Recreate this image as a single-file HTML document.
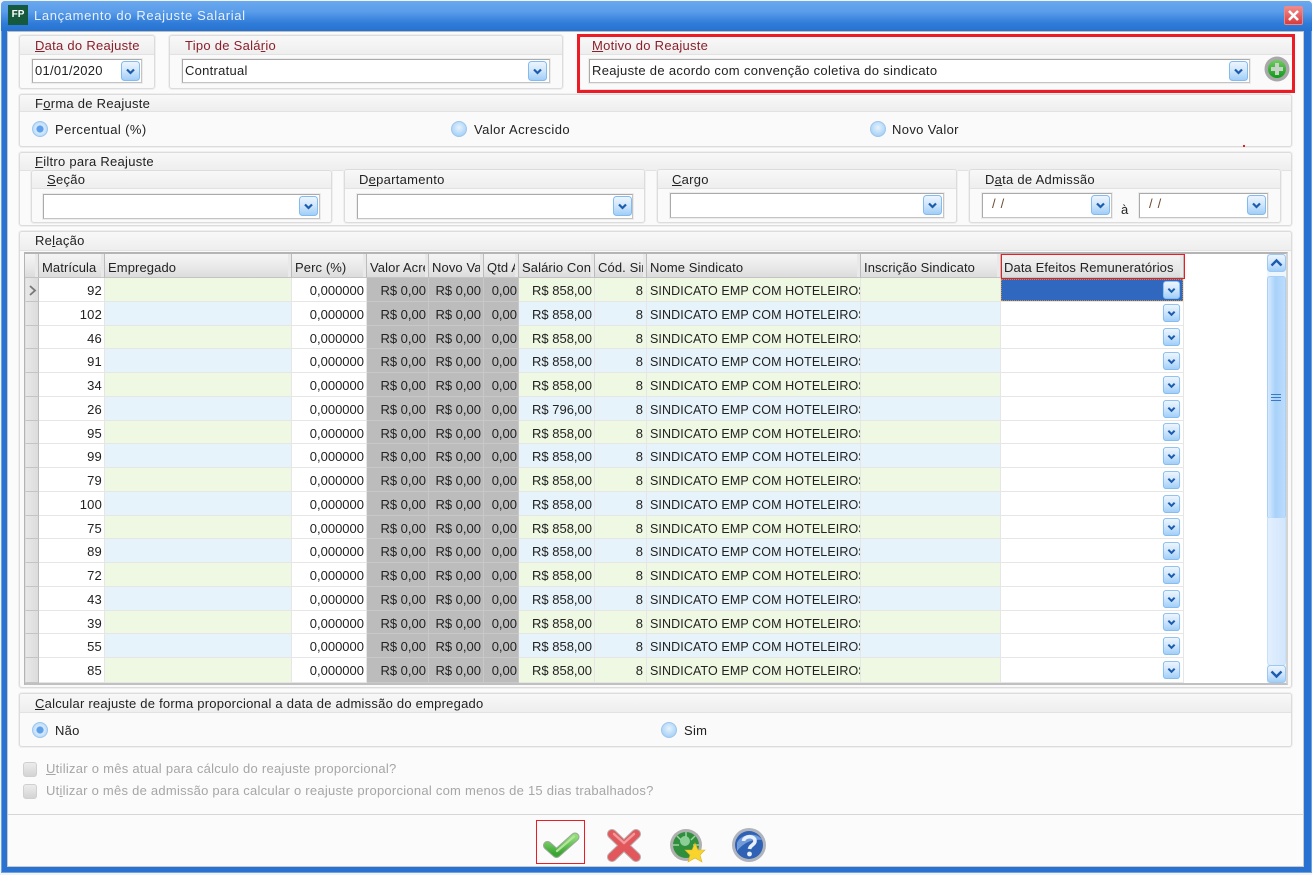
<!DOCTYPE html>
<html lang="pt"><head><meta charset="utf-8"><title>Lançamento do Reajuste Salarial</title>
<style>
*{box-sizing:border-box;margin:0;padding:0}
html,body{width:1312px;height:875px;overflow:hidden;background:#f2f3f4}
body{font:13px/16px "Liberation Sans",sans-serif;color:#222;letter-spacing:.27px}
#root{position:absolute;left:0;top:0;width:1312px;height:875px;overflow:hidden;filter:blur(.35px)}
.a,.p,.h,.i,.t,.cb,.ra,.ck,.r,.th,svg.b{position:absolute}
#win{position:absolute;left:1px;top:1px;width:1311px;height:872px;background:#2a72d2;border-radius:4px 4px 0 0;border:1px solid #6ea4de}
#tb{position:absolute;left:1px;top:1px;width:1311px;height:30px;background:linear-gradient(#6aa8ee,#5a9dea 35%,#2f7bd8 75%,#2672d2);border-radius:4px 4px 0 0}
#body{position:absolute;left:7px;top:31px;width:1297px;height:836px;background:#fbfbfb;border:1px solid #c8c8c8;border-top-color:#bcbcbc}
.p{background:#fafafa;border:1px solid #dcdcdc;border-radius:3px;box-shadow:0 0 0 1px #efefef}
.h{left:0;top:0;right:0;background:linear-gradient(#f8f8f8,#eeeeee);border-bottom:1px solid #e2e2e2;border-radius:3px 3px 0 0}
.t{white-space:nowrap}
.red{color:#8c1f2a}
.i{background:#fff;border:1px solid #aaa;border-bottom-color:#c4c4c4;border-right-color:#c4c4c4;box-shadow:0 0 0 1px #ececec}
.ra{width:16px;height:16px;border-radius:50%;background:radial-gradient(circle at 50% 40%,#e6f2fd,#a9d2f6 75%,#8cc0f0);border:1px solid #9cc6ee}
.ra.on{background:radial-gradient(circle,#5fa0ea 0,#5fa0ea 32%,#d8eafb 40%,#a9d2f6 90%)}
.ck{width:14px;height:15px;background:linear-gradient(#ececec,#d4d4d4);border:1px solid #d0d0d0;border-radius:3px}
.dis{color:#a6a6a6}
.th{top:254px;height:24px;background:linear-gradient(#f5f5f5,#e8e8e8 60%,#dcdcdc);border-right:1px solid #bcbcbc;border-bottom:1px solid #c4c4c4;padding:6px 0 0 3px;line-height:15px;overflow:hidden;white-space:nowrap;letter-spacing:.1px}
.th::after{content:"";position:absolute;right:0;top:0;bottom:0;width:3px;background:#e9e9e9}
.r{left:25px;width:1159px;height:23.75px;display:flex;overflow:hidden;letter-spacing:0}
.r span{display:block;height:100%;border-right:1px solid #e6e6e6;border-bottom:1px solid #e6e6e6;line-height:26px;overflow:hidden;white-space:nowrap;text-align:right;padding-right:2px;background:#fff}
.r span:nth-child(1){width:14px;background:linear-gradient(90deg,#e8e8e8,#dcdcdc);border-right:1px solid #bbb;border-left:1px solid #ddd;border-bottom:1px solid #c4c4c4}
.r span:nth-child(2){width:66px;letter-spacing:.2px}
.r span:nth-child(3){width:187px}
.r span:nth-child(4){width:75px}
.r span:nth-child(5){width:62px;background:#bcbcbc;border-color:#c8c8c8}
.r span:nth-child(6){width:55px;background:#bcbcbc;border-color:#c8c8c8}
.r span:nth-child(7){width:35px;background:#bcbcbc;border-color:#c8c8c8;padding-right:1px}
.r span:nth-child(8){width:76px}
.r span:nth-child(9){width:52px;padding-right:3px}
.r span:nth-child(10){width:214px;text-align:left;padding:0 0 0 3px;font-size:12.5px;letter-spacing:.1px}
.r span:nth-child(11){width:140px}
.r span:nth-child(12){width:183px}
.g span:nth-child(3),.g span:nth-child(8),.g span:nth-child(9),.g span:nth-child(10),.g span:nth-child(11){background:#eff8e2}
.u span:nth-child(3),.u span:nth-child(8),.u span:nth-child(9),.u span:nth-child(10),.u span:nth-child(11){background:#e6f3fa}
svg.b{width:19px;height:20px}
u{text-underline-offset:1px}
</style></head><body>
<svg width="0" height="0" style="position:absolute"><defs>
<linearGradient id="bg" x1="0" y1="0" x2="0" y2="1"><stop offset="0" stop-color="#eef6fe"/><stop offset=".5" stop-color="#cfe5fb"/><stop offset="1" stop-color="#9fcdf8"/></linearGradient>
<linearGradient id="gc" x1="0" y1="0" x2="0" y2="1"><stop offset="0" stop-color="#8fdc78"/><stop offset="1" stop-color="#38a632"/></linearGradient>
<linearGradient id="gp" x1="0" y1="0" x2="0" y2="1"><stop offset="0" stop-color="#70cc60"/><stop offset="1" stop-color="#0e9a18"/></linearGradient>
<symbol id="cmb" viewBox="0 0 19 20"><rect x=".5" y=".5" width="18" height="19" rx="3" fill="url(#bg)" stroke="#82bbf0"/><path d="M6 8.5 9.5 12 13 8.5" fill="none" stroke="#1b5cae" stroke-width="2.2"/></symbol>
</defs></svg>
<div id="root">
<div id="win"></div>
<div id="tb"></div>
<div class="a" style="left:8px;top:5px;width:20px;height:20px;background:#155a3c;color:#fff;font:bold 10px/20px 'Liberation Sans',sans-serif;text-align:center;letter-spacing:0">FP</div>
<div class="t" style="left:34px;top:8px;color:#e8f1fb;font-size:13px;letter-spacing:.65px">Lançamento do Reajuste Salarial</div>
<div class="a" style="left:1284px;top:6px;width:19px;height:19px;background:linear-gradient(#f08a8a,#d83c3c);border:1px solid #e88;border-radius:2px"></div>
<svg class="a" style="left:1287px;top:9px" width="13" height="13" viewBox="0 0 13 13"><path d="M2 2 11 11M11 2 2 11" stroke="#fff" stroke-width="2.6"/></svg>
<div id="body"></div>

<!-- top panels -->
<div class="p" style="left:19px;top:35px;width:136px;height:54px"><div class="h" style="height:19px"></div></div>
<div class="t red" style="left:35px;top:38px"><u>D</u>ata do Reajuste</div>
<div class="i" style="left:32px;top:59px;width:110px;height:24px"></div>
<div class="t" style="left:35px;top:63px">01/01/2020</div>
<svg class="b" style="left:121px;top:61px"><use href="#cmb"/></svg>

<div class="p" style="left:169px;top:35px;width:394px;height:54px"><div class="h" style="height:19px"></div></div>
<div class="t red" style="left:185px;top:38px">Tipo de Salá<u>r</u>io</div>
<div class="i" style="left:182px;top:59px;width:368px;height:24px"></div>
<div class="t" style="left:185px;top:63px">Contratual</div>
<svg class="b" style="left:528px;top:61px"><use href="#cmb"/></svg>

<div class="p" style="left:579px;top:36px;width:714px;height:54px"><div class="h" style="height:18px"></div></div>
<div class="t red" style="left:592px;top:38px"><u>M</u>otivo do Reajuste</div>
<div class="i" style="left:589px;top:59px;width:661px;height:24px"></div>
<div class="t" style="left:592px;top:63px;letter-spacing:.32px">Reajuste de acordo com convenção coletiva do sindicato</div>
<svg class="b" style="left:1229px;top:61px"><use href="#cmb"/></svg>
<svg class="a" style="left:1264px;top:56px" width="26" height="26" viewBox="0 0 26 26"><circle cx="13" cy="13" r="12.5" fill="#a8a8a8"/><circle cx="13" cy="13" r="9" fill="url(#gp)"/><path d="M13 7V19M7 13H19" stroke="#c8d2c8" stroke-width="4"/></svg>
<div class="a" style="left:577px;top:34px;width:718px;height:59px;border:3px solid #ed1c24"></div>

<!-- forma -->
<div class="p" style="left:19px;top:94px;width:1273px;height:53px"><div class="h" style="height:17px"></div></div>
<div class="t" style="left:35px;top:96px">F<u>o</u>rma de Reajuste</div>
<div class="ra on" style="left:32px;top:121px"></div><div class="t" style="left:55px;top:122px;letter-spacing:.4px">Percentual (%)</div>
<div class="ra" style="left:451px;top:121px"></div><div class="t" style="left:474px;top:122px;letter-spacing:.45px">Valor Acrescido</div>
<div class="ra" style="left:870px;top:121px"></div><div class="t" style="left:892px;top:122px;letter-spacing:.35px">Novo Valor</div>
<div class="a" style="left:1243px;top:145px;width:2px;height:2px;background:#ed1c24"></div>

<!-- filtro -->
<div class="p" style="left:19px;top:152px;width:1273px;height:74px"><div class="h" style="height:18px"></div></div>
<div class="p" style="left:31px;top:170px;width:301px;height:53px"><div class="h" style="height:18px"></div></div>
<div class="t" style="left:35px;top:154px;z-index:2"><u>F</u>iltro para Reajuste</div>
<div class="t" style="left:47px;top:172px"><u>S</u>eção</div>
<div class="i" style="left:43px;top:194px;width:277px;height:25px"></div>
<svg class="b" style="left:299px;top:196px"><use href="#cmb"/></svg>
<div class="p" style="left:344px;top:169px;width:301px;height:54px"><div class="h" style="height:19px"></div></div>
<div class="t" style="left:359px;top:172px">D<u>e</u>partamento</div>
<div class="i" style="left:357px;top:194px;width:276px;height:25px"></div>
<svg class="b" style="left:613px;top:196px"><use href="#cmb"/></svg>
<div class="p" style="left:657px;top:169px;width:300px;height:54px"><div class="h" style="height:19px"></div></div>
<div class="t" style="left:672px;top:172px"><u>C</u>argo</div>
<div class="i" style="left:670px;top:193px;width:274px;height:25px"></div>
<svg class="b" style="left:923px;top:195px"><use href="#cmb"/></svg>
<div class="p" style="left:969px;top:169px;width:312px;height:54px"><div class="h" style="height:19px"></div></div>
<div class="t" style="left:985px;top:172px">D<u>a</u>ta de Admissão</div>
<div class="i" style="left:982px;top:193px;width:130px;height:25px"></div>
<div class="t" style="left:992px;top:196px;letter-spacing:5px;color:#6b4a30">//</div>
<svg class="b" style="left:1091px;top:195px"><use href="#cmb"/></svg>
<div class="t" style="left:1121px;top:202px">à</div>
<div class="i" style="left:1139px;top:193px;width:129px;height:25px"></div>
<div class="t" style="left:1149px;top:196px;letter-spacing:5px;color:#6b4a30">//</div>
<svg class="b" style="left:1247px;top:195px"><use href="#cmb"/></svg>

<!-- relacao -->
<div class="p" style="left:19px;top:231px;width:1273px;height:457px"><div class="h" style="height:19px"></div></div>
<div class="t" style="left:35px;top:233px">Re<u>l</u>ação</div>
<div class="a" style="left:24px;top:252px;width:1264px;height:433px;background:#fff;border:2px solid #b4b4b4;border-right-color:#d4d4d4;border-bottom-color:#c0c0c0"></div>

<div class="th" style="left:25px;width:14px"></div>
<div class="th" style="left:39px;width:66px">Matrícula</div>
<div class="th" style="left:105px;width:187px">Empregado</div>
<div class="th" style="left:292px;width:75px">Perc (%)</div>
<div class="th" style="left:367px;width:62px">Valor Acrescido</div>
<div class="th" style="left:429px;width:55px">Novo Valor</div>
<div class="th" style="left:484px;width:35px">Qtd Anos</div>
<div class="th" style="left:519px;width:76px">Salário Contratual</div>
<div class="th" style="left:595px;width:52px">Cód. Sindicato</div>
<div class="th" style="left:647px;width:214px">Nome Sindicato</div>
<div class="th" style="left:861px;width:140px">Inscrição Sindicato</div>
<div class="th" style="left:1001px;width:183px">Data Efeitos Remuneratórios</div>

<div class="r g" style="top:278px"><span></span><span>92</span><span></span><span>0,000000</span><span>R$ 0,00</span><span>R$ 0,00</span><span>0,00</span><span>R$ 858,00</span><span>8</span><span>SINDICATO EMP COM HOTELEIROS</span><span></span><span style="background:#3068c0"></span></div>
<div class="r u" style="top:301.75px"><span></span><span>102</span><span></span><span>0,000000</span><span>R$ 0,00</span><span>R$ 0,00</span><span>0,00</span><span>R$ 858,00</span><span>8</span><span>SINDICATO EMP COM HOTELEIROS</span><span></span><span></span></div>
<div class="r g" style="top:325.5px"><span></span><span>46</span><span></span><span>0,000000</span><span>R$ 0,00</span><span>R$ 0,00</span><span>0,00</span><span>R$ 858,00</span><span>8</span><span>SINDICATO EMP COM HOTELEIROS</span><span></span><span></span></div>
<div class="r u" style="top:349.25px"><span></span><span>91</span><span></span><span>0,000000</span><span>R$ 0,00</span><span>R$ 0,00</span><span>0,00</span><span>R$ 858,00</span><span>8</span><span>SINDICATO EMP COM HOTELEIROS</span><span></span><span></span></div>
<div class="r g" style="top:373px"><span></span><span>34</span><span></span><span>0,000000</span><span>R$ 0,00</span><span>R$ 0,00</span><span>0,00</span><span>R$ 858,00</span><span>8</span><span>SINDICATO EMP COM HOTELEIROS</span><span></span><span></span></div>
<div class="r u" style="top:396.75px"><span></span><span>26</span><span></span><span>0,000000</span><span>R$ 0,00</span><span>R$ 0,00</span><span>0,00</span><span>R$ 796,00</span><span>8</span><span>SINDICATO EMP COM HOTELEIROS</span><span></span><span></span></div>
<div class="r g" style="top:420.5px"><span></span><span>95</span><span></span><span>0,000000</span><span>R$ 0,00</span><span>R$ 0,00</span><span>0,00</span><span>R$ 858,00</span><span>8</span><span>SINDICATO EMP COM HOTELEIROS</span><span></span><span></span></div>
<div class="r u" style="top:444.25px"><span></span><span>99</span><span></span><span>0,000000</span><span>R$ 0,00</span><span>R$ 0,00</span><span>0,00</span><span>R$ 858,00</span><span>8</span><span>SINDICATO EMP COM HOTELEIROS</span><span></span><span></span></div>
<div class="r g" style="top:468px"><span></span><span>79</span><span></span><span>0,000000</span><span>R$ 0,00</span><span>R$ 0,00</span><span>0,00</span><span>R$ 858,00</span><span>8</span><span>SINDICATO EMP COM HOTELEIROS</span><span></span><span></span></div>
<div class="r u" style="top:491.75px"><span></span><span>100</span><span></span><span>0,000000</span><span>R$ 0,00</span><span>R$ 0,00</span><span>0,00</span><span>R$ 858,00</span><span>8</span><span>SINDICATO EMP COM HOTELEIROS</span><span></span><span></span></div>
<div class="r g" style="top:515.5px"><span></span><span>75</span><span></span><span>0,000000</span><span>R$ 0,00</span><span>R$ 0,00</span><span>0,00</span><span>R$ 858,00</span><span>8</span><span>SINDICATO EMP COM HOTELEIROS</span><span></span><span></span></div>
<div class="r u" style="top:539.25px"><span></span><span>89</span><span></span><span>0,000000</span><span>R$ 0,00</span><span>R$ 0,00</span><span>0,00</span><span>R$ 858,00</span><span>8</span><span>SINDICATO EMP COM HOTELEIROS</span><span></span><span></span></div>
<div class="r g" style="top:563px"><span></span><span>72</span><span></span><span>0,000000</span><span>R$ 0,00</span><span>R$ 0,00</span><span>0,00</span><span>R$ 858,00</span><span>8</span><span>SINDICATO EMP COM HOTELEIROS</span><span></span><span></span></div>
<div class="r u" style="top:586.75px"><span></span><span>43</span><span></span><span>0,000000</span><span>R$ 0,00</span><span>R$ 0,00</span><span>0,00</span><span>R$ 858,00</span><span>8</span><span>SINDICATO EMP COM HOTELEIROS</span><span></span><span></span></div>
<div class="r g" style="top:610.5px"><span></span><span>39</span><span></span><span>0,000000</span><span>R$ 0,00</span><span>R$ 0,00</span><span>0,00</span><span>R$ 858,00</span><span>8</span><span>SINDICATO EMP COM HOTELEIROS</span><span></span><span></span></div>
<div class="r u" style="top:634.25px"><span></span><span>55</span><span></span><span>0,000000</span><span>R$ 0,00</span><span>R$ 0,00</span><span>0,00</span><span>R$ 858,00</span><span>8</span><span>SINDICATO EMP COM HOTELEIROS</span><span></span><span></span></div>
<div class="r g" style="top:658px;height:25px"><span></span><span>85</span><span></span><span>0,000000</span><span>R$ 0,00</span><span>R$ 0,00</span><span>0,00</span><span>R$ 858,00</span><span>8</span><span>SINDICATO EMP COM HOTELEIROS</span><span></span><span></span></div>

<svg class="a" style="left:28px;top:285px" width="10" height="11" viewBox="0 0 10 11"><path d="M2 1 7 5.5 2 10" fill="none" stroke="#777" stroke-width="1.8"/></svg>
<div class="a" style="left:1001px;top:279px;width:182px;height:22px;border:1px dotted #c9872f"></div>
<svg class="b" style="left:1162px;top:281px;height:18px"><use href="#cmb"/></svg>
<svg class="b" style="left:1162px;top:304px;height:18px"><use href="#cmb"/></svg>
<svg class="b" style="left:1162px;top:328px;height:18px"><use href="#cmb"/></svg>
<svg class="b" style="left:1162px;top:352px;height:18px"><use href="#cmb"/></svg>
<svg class="b" style="left:1162px;top:376px;height:18px"><use href="#cmb"/></svg>
<svg class="b" style="left:1162px;top:400px;height:18px"><use href="#cmb"/></svg>
<svg class="b" style="left:1162px;top:423px;height:18px"><use href="#cmb"/></svg>
<svg class="b" style="left:1162px;top:447px;height:18px"><use href="#cmb"/></svg>
<svg class="b" style="left:1162px;top:471px;height:18px"><use href="#cmb"/></svg>
<svg class="b" style="left:1162px;top:495px;height:18px"><use href="#cmb"/></svg>
<svg class="b" style="left:1162px;top:518px;height:18px"><use href="#cmb"/></svg>
<svg class="b" style="left:1162px;top:542px;height:18px"><use href="#cmb"/></svg>
<svg class="b" style="left:1162px;top:566px;height:18px"><use href="#cmb"/></svg>
<svg class="b" style="left:1162px;top:590px;height:18px"><use href="#cmb"/></svg>
<svg class="b" style="left:1162px;top:613px;height:18px"><use href="#cmb"/></svg>
<svg class="b" style="left:1162px;top:637px;height:18px"><use href="#cmb"/></svg>
<svg class="b" style="left:1162px;top:661px;height:18px"><use href="#cmb"/></svg>
<div class="a" style="left:1001px;top:254px;width:184px;height:25px;border:1px solid #ed1c24"></div>

<!-- scrollbar -->
<div class="a" style="left:1267px;top:254px;width:19px;height:429px;background:#edf5fd"></div>
<div class="a" style="left:1267px;top:276px;width:19px;height:243px;background:linear-gradient(90deg,#d6e9fc,#a8d2fa 45%,#bcdcfb);border:1px solid #a9d0f5;border-radius:3px"></div>
<div class="a" style="left:1267px;top:518px;width:19px;height:148px;background:linear-gradient(90deg,#e2effd,#d2e6fc);border:1px solid #c8e0f8;border-top:0;border-radius:0 0 4px 4px"></div>
<div class="a" style="left:1271px;top:394px;width:10px;height:7px;border-top:1px solid #3a78c8;border-bottom:1px solid #3a78c8"></div>
<div class="a" style="left:1271px;top:397px;width:10px;height:1px;background:#3a78c8"></div>
<svg class="a" style="left:1267px;top:254px" width="19" height="18" viewBox="0 0 19 18"><rect x=".5" y=".5" width="18" height="17" rx="3" fill="url(#bg)" stroke="#9cc8f2"/><path d="M4.5 11.5 9.5 6.5 14.5 11.5" fill="none" stroke="#1b5cae" stroke-width="2.4"/></svg>
<svg class="a" style="left:1267px;top:665px" width="19" height="18" viewBox="0 0 19 18"><rect x=".5" y=".5" width="18" height="17" rx="3" fill="url(#bg)" stroke="#9cc8f2"/><path d="M4.5 6.5 9.5 11.5 14.5 6.5" fill="none" stroke="#1b5cae" stroke-width="2.4"/></svg>

<!-- calcular -->
<div class="p" style="left:19px;top:693px;width:1273px;height:54px"><div class="h" style="height:19px"></div></div>
<div class="t" style="left:35px;top:696px;letter-spacing:.23px"><u>C</u>alcular reajuste de forma proporcional a data de admissão do empregado</div>
<div class="ra on" style="left:32px;top:722px"></div><div class="t" style="left:55px;top:723px">Não</div>
<div class="ra" style="left:661px;top:722px"></div><div class="t" style="left:684px;top:723px">Sim</div>

<div class="ck" style="left:23px;top:762px"></div>
<div class="t dis" style="left:46px;top:761px"><u>U</u>tilizar o mês atual para cálculo do reajuste proporcional?</div>
<div class="ck" style="left:23px;top:784px"></div>
<div class="t dis" style="left:46px;top:783px;letter-spacing:.25px">Ut<u>i</u>lizar o mês de admissão para calcular o reajuste proporcional com menos de 15 dias trabalhados?</div>

<!-- footer -->
<div class="a" style="left:8px;top:814px;width:1295px;height:1px;background:#d6d6d6"></div>
<div class="a" style="left:536px;top:820px;width:49px;height:44px;border:1px solid #ed1c24"></div>
<svg class="a" style="left:542px;top:830px" width="40" height="32" viewBox="0 0 40 32"><path d="M5.5 15.5 14.5 23.5 33 7" fill="none" stroke="#9aa89a" stroke-width="9" stroke-linecap="round" stroke-linejoin="round"/><path d="M5.5 15.5 14.5 23.5 33 7" fill="none" stroke="url(#gc)" stroke-width="7" stroke-linecap="round" stroke-linejoin="round"/><path d="M15 21 32 6.5" fill="none" stroke="#b4e49a" stroke-width="2.2" stroke-linecap="round"/></svg>
<svg class="a" style="left:606px;top:828px" width="36" height="34" viewBox="0 0 36 34"><path d="M6 6 30 29M30 6 6 29" fill="none" stroke="#b8aaaa" stroke-width="10" stroke-linecap="round"/><path d="M6 6 30 29M30 6 6 29" fill="none" stroke="#e2575c" stroke-width="8" stroke-linecap="round"/><path d="M8 6 18 15 28 6" fill="none" stroke="#f09a9c" stroke-width="2.5" stroke-linecap="round"/></svg>
<svg class="a" style="left:668px;top:827px" width="38" height="36" viewBox="0 0 38 36"><circle cx="18" cy="18" r="16" fill="#b0b0b0"/><circle cx="18" cy="18" r="13" fill="#2f8f3c"/><circle cx="17" cy="14" r="5" fill="#8ccf96"/><path d="M18 5V10M5 18H11M25 18H31M9 9 13 13M27 9 23 13" stroke="#9bd3a3" stroke-width="1.5"/><path d="M27 16 30 23 37 23 32 28 34 35 27 31 20 35 22 28 17 23 24 23Z" fill="#f9d42c" stroke="#d9b424" stroke-width=".6"/></svg>
<svg class="a" style="left:731px;top:827px" width="36" height="36" viewBox="0 0 36 36"><circle cx="18" cy="18" r="17" fill="#b0b4bc"/><circle cx="18" cy="18" r="14" fill="#2f62b4"/><path d="M6 16C9 7 26 4 31 13 24 12 14 14 6 24Z" fill="#8fb4e8" opacity=".7"/><path d="M12.5 14C13 8.5 24 8 24 14 24 18 19 18 18.5 22" fill="none" stroke="#e8f0fb" stroke-width="3.6"/><circle cx="18.5" cy="27" r="2.4" fill="#e8f0fb"/></svg>
</div>
</body></html>
